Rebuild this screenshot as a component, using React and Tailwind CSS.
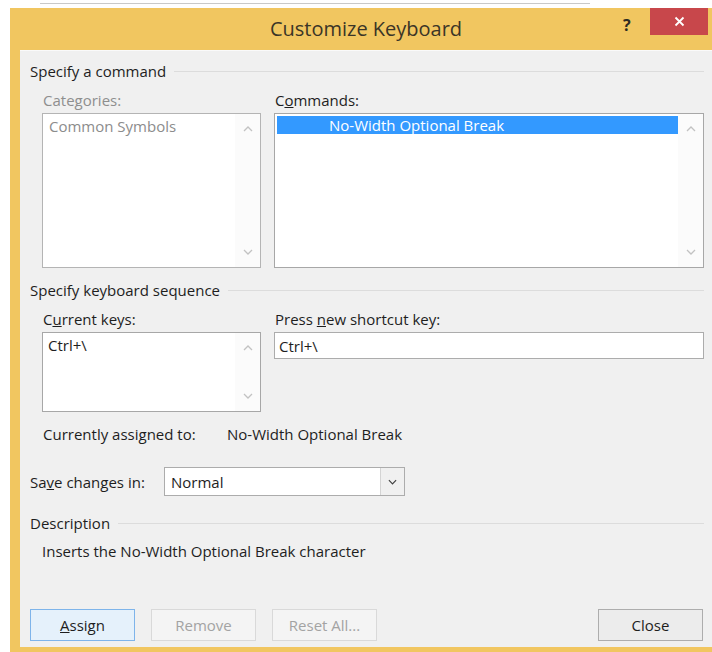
import React from "react";

const FONT = { fontFamily: '"Open Sans", "Noto Sans", "Liberation Sans", sans-serif' };

function Chevron({ dir = "down", color = "#c2c2c2", size = 9 }) {
  const pts = dir === "up" ? "1,6 5,2 9,6" : "1,2 5,6 9,2";
  return (
    <svg width={size + 1} height={8} viewBox="0 0 10 8" className="block">
      <polyline points={pts} fill="none" stroke={color} strokeWidth="1.3" />
    </svg>
  );
}

function GroupHeader({ children, className = "" }) {
  return (
    <div className={`flex items-center gap-2 pl-[10px] pr-[8px] ${className}`}>
      <span className="whitespace-nowrap text-[#1e1e1e]">{children}</span>
      <div className="h-px flex-1 bg-[#dcdcdc]" />
    </div>
  );
}

function ListBox({ height, children, disabled = false }) {
  return (
    <div
      className={`flex bg-white border ${disabled ? "border-[#b4b4b4]" : "border-[#a7a7a7]"}`}
      style={{ height }}
    >
      <div className="flex-1 pt-[2px] pl-[2px] overflow-hidden">{children}</div>
      <div className="w-[25px] flex flex-col items-center justify-between py-[11px] bg-[#fbfbfb]">
        <Chevron dir="up" />
        <Chevron dir="down" />
      </div>
    </div>
  );
}

function Btn({ children, variant = "normal", className = "" }) {
  const styles = {
    primary: "bg-[#e5f1fb] border-[#7eb4ea] text-[#1e1e1e]",
    normal: "bg-[#ececec] border-[#adadad] text-[#1e1e1e]",
    disabled: "bg-[#f4f4f4] border-[#d9d9d9] text-[#a3a3a3]",
  };
  return (
    <div
      className={`w-[105px] h-[32px] border flex items-center justify-center ${styles[variant]} ${className}`}
    >
      {children}
    </div>
  );
}

export default function App() {
  return (
    <div className="w-[712px] h-[652px] bg-white overflow-hidden text-[15px] leading-[20px]" style={FONT}>
      {/* window behind the dialog */}
      <div className="h-[8px] relative">
        <div className="absolute left-[40px] top-[3px] w-[550px] h-px bg-[#c9c9c9]" />
      </div>

      <div className="ml-[10px] h-[644px] bg-[#f1c660] flex flex-col">
        {/* title bar */}
        <div className="h-[42px] relative flex items-center justify-center pl-[10px] pb-[1px]">
          <span className="text-[20px] text-[#3b3527]">Customize Keyboard</span>
          <span className="absolute left-[613px] top-[7px] text-[16px] font-bold text-[#2d2a22]">?</span>
          <div className="absolute left-[640px] top-0 w-[58px] h-[27px] bg-[#c8474b] flex items-center justify-center">
            <svg width="11" height="11" viewBox="0 0 11 11">
              <path d="M1.5 1.5 L9.5 9.5 M9.5 1.5 L1.5 9.5" stroke="#fff" strokeWidth="1.8" />
            </svg>
          </div>
        </div>

        {/* client area */}
        <div className="flex-1 ml-[10px] mb-[5px] bg-[#f0f0f0] border-t border-[#fafafa] flex flex-col">
          <GroupHeader className="mt-[10px]">Specify a command</GroupHeader>

          <div className="flex pl-[22px] mt-[9px]">
            <div className="w-[219px]">
              <div className="pl-px text-[#8e8e8e]">Categories:</div>
              <div className="mt-[3px]">
                <ListBox height={155} disabled>
                  <div className="pl-[4px] text-[#8c8c8c]">Common Symbols</div>
                </ListBox>
              </div>
            </div>
            <div className="w-[430px] ml-[13px]">
              <div className="pl-px text-[#1e1e1e]">
                C<span className="underline">o</span>mmands:
              </div>
              <div className="mt-[3px]">
                <ListBox height={155}>
                  <div className="h-[18px] bg-[#3399ff] text-white pl-[52px] leading-[18px]">
                    No-Width Optional Break
                  </div>
                </ListBox>
              </div>
            </div>
          </div>

          <GroupHeader className="mt-[12px]">Specify keyboard sequence</GroupHeader>

          <div className="flex pl-[22px] mt-[9px]">
            <div className="w-[219px]">
              <div className="pl-px text-[#1e1e1e]">
                C<span className="underline">u</span>rrent keys:
              </div>
              <div className="mt-[3px]">
                <ListBox height={80}>
                  <div className="pl-[3px] text-[#1e1e1e]">Ctrl+\</div>
                </ListBox>
              </div>
            </div>
            <div className="w-[430px] ml-[13px]">
              <div className="pl-px text-[#1e1e1e]">
                Press <span className="underline">n</span>ew shortcut key:
              </div>
              <div className="mt-[3px] h-[27px] bg-white border border-[#acacac] flex items-center pl-[4px] text-[#1e1e1e]">
                Ctrl+\
              </div>
            </div>
          </div>

          <div className="flex pl-[23px] mt-[12px] text-[#1e1e1e]">
            <span className="w-[184px]">Currently assigned to:</span>
            <span>No-Width Optional Break</span>
          </div>

          <div className="flex items-center pl-[10px] mt-[23px] text-[#1e1e1e]">
            <span className="w-[134px]">
              Sa<span className="underline">v</span>e changes in:
            </span>
            <div className="w-[241px] h-[29px] bg-white border border-[#acacac] flex">
              <div className="flex-1 pl-[6px] flex items-center">Normal</div>
              <div className="w-[24px] border-l border-[#d4d4d4] bg-[#f0f0f0] flex items-center justify-center">
                <Chevron dir="down" color="#404040" size={8} />
              </div>
            </div>
          </div>

          <GroupHeader className="mt-[17px]">Description</GroupHeader>

          <div className="pl-[22px] mt-[8px] text-[#1e1e1e]">
            Inserts the No-Width Optional Break character
          </div>

          <div className="mt-auto mb-[6px] flex pl-[10px] pr-[9px]">
            <Btn variant="primary">
              <span>
                <span className="underline">A</span>ssign
              </span>
            </Btn>
            <Btn variant="disabled" className="ml-[16px]">Remove</Btn>
            <Btn variant="disabled" className="ml-[16px]">Reset All...</Btn>
            <Btn className="ml-auto">Close</Btn>
          </div>
        </div>
      </div>
    </div>
  );
}
